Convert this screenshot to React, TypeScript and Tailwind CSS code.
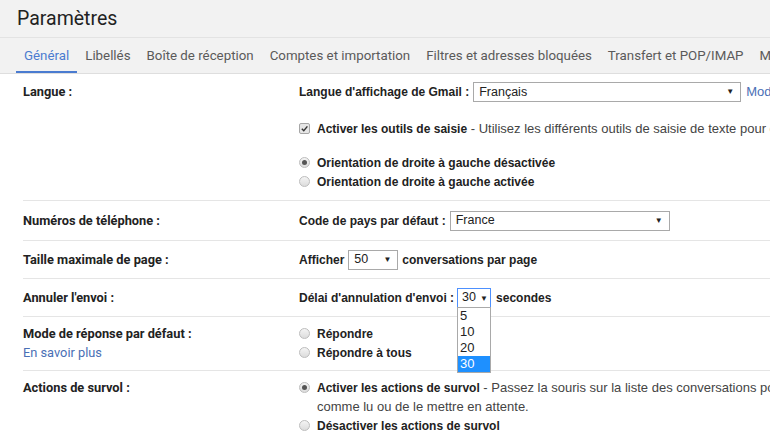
import React from "react";

const arial = { fontFamily: '"Liberation Sans", Arial, sans-serif' };

function Caret() {
  return <span className="text-[8px] text-[#222] leading-none">▼</span>;
}

function Select({ value, w }: { value: string; w: string }) {
  return (
    <div
      className={`${w} h-[20px] flex items-center justify-between bg-white border border-[#a9a9a9] pl-[5px] pr-[6px] text-[12.5px] text-[#222] font-normal`}
      style={arial}
    >
      <span>{value}</span>
      <Caret />
    </div>
  );
}

function Radio({ checked }: { checked?: boolean }) {
  return (
    <span className="w-[11px] h-[11px] rounded-full border border-[#bdbdbd] bg-gradient-to-b from-[#f4f4f4] to-[#dcdcdc] flex items-center justify-center shrink-0">
      {checked && <span className="w-[5px] h-[5px] rounded-full bg-[#555]" />}
    </span>
  );
}

function Check() {
  return (
    <span className="w-[11px] h-[11px] rounded-[2px] border border-[#a6a6a6] bg-[#e6e6e6] flex items-center justify-center shrink-0">
      <svg width="9" height="9" viewBox="0 0 10 10">
        <path d="M2 5.2 L4.2 7.4 L8.2 2.6" fill="none" stroke="#333" strokeWidth="1.6" />
      </svg>
    </span>
  );
}

function Label({ children }: { children: React.ReactNode }) {
  return (
    <div className="w-[276px] shrink-0 text-[12.8px] font-bold text-[#222] leading-[19px]" style={{ fontFamily: "Roboto, Arial, sans-serif" }}>
      {children}
    </div>
  );
}

export default function App() {
  const tabs = [
    "Général",
    "Libellés",
    "Boîte de réception",
    "Comptes et importation",
    "Filtres et adresses bloquées",
    "Transfert et POP/IMAP",
    "Modules",
  ];
  return (
    <div className="w-[770px] h-[433px] overflow-hidden bg-white" style={{ fontFamily: "Roboto, Arial, sans-serif" }}>
      <div className="h-[38px] bg-[#f2f2f2] border-b border-[#e3e3e3] pl-[17px] flex items-center">
        <span className="text-[19.5px] text-[#222] leading-none pt-[1px]">Paramètres</span>
      </div>
      <div className="h-[36px] bg-[#f2f2f2] border-b border-[#dedede] pl-[16px] flex items-stretch whitespace-nowrap overflow-hidden">
        {tabs.map((t, i) => (
          <div
            key={t}
            className={`relative flex items-center px-[8px] text-[13.3px] ${i === 0 ? "text-[#4a7bd0]" : "text-[#5a5a5a]"}`}
          >
            <span>{t}</span>
            {i === 0 && <span className="absolute left-0 right-0 bottom-[-1px] h-[3px] bg-[#4a7bd0]" />}
          </div>
        ))}
      </div>

      <div className="pl-[23px] text-[12px] text-[#222]" style={arial}>
        {/* Langue */}
        <div className="flex border-b border-[#e5e5e5] pt-[8px] pb-[9px]">
          <Label>Langue :</Label>
          <div className="flex flex-col whitespace-nowrap">
            <div className="flex items-center h-[20px]">
              <span className="font-bold mr-[4px]">Langue d'affichage de Gmail :</span>
              <Select value="Français" w="w-[268px]" />
              <span className="ml-[5px] text-[13px] text-[#4a6fb5]">Modifier la langue</span>
            </div>
            <div className="flex items-center h-[19px] mt-[17px]">
              <Check />
              <span className="ml-[7px] font-bold">Activer les outils de saisie</span>
              <span className="text-[13px] text-[#444]">&nbsp;- Utilisez les différents outils de saisie de texte pour écrire</span>
            </div>
            <div className="flex items-center h-[19px] mt-[15px]">
              <Radio checked />
              <span className="ml-[7px] font-bold">Orientation de droite à gauche désactivée</span>
            </div>
            <div className="flex items-center h-[19px]">
              <Radio />
              <span className="ml-[7px] font-bold">Orientation de droite à gauche activée</span>
            </div>
          </div>
        </div>

        {/* Téléphone */}
        <div className="flex items-center border-b border-[#e5e5e5] h-[40px]">
          <Label>Numéros de téléphone :</Label>
          <div className="flex items-center whitespace-nowrap">
            <span className="font-bold mr-[4px]">Code de pays par défaut :</span>
            <Select value="France" w="w-[220px]" />
          </div>
        </div>

        {/* Taille */}
        <div className="flex items-center border-b border-[#e5e5e5] h-[38px]">
          <Label>Taille maximale de page :</Label>
          <div className="flex items-center whitespace-nowrap">
            <span className="font-bold mr-[4px]">Afficher</span>
            <Select value="50" w="w-[50px]" />
            <span className="font-bold ml-[4px]">conversations par page</span>
          </div>
        </div>

        {/* Annuler */}
        <div className="flex items-center border-b border-[#e5e5e5] h-[38px]">
          <Label>Annuler l'envoi :</Label>
          <div className="flex items-center whitespace-nowrap">
            <span className="font-bold mr-[3px]">Délai d'annulation d'envoi :</span>
            <div className="relative">
              <div
                className="w-[34px] h-[20px] flex items-center bg-white border border-[#4d90fe] pl-[4px] text-[12.5px] text-[#222]"
                style={arial}
              >
                <span>30</span>
                <span className="ml-[4px]"><Caret /></span>
              </div>
              <div className="absolute left-0 top-[19px] w-[34px] bg-white border border-[#a9a9a9] z-10 text-[13px] leading-[16px]">
                {["5", "10", "20", "30"].map((o) => (
                  <div key={o} className={`pl-[2px] ${o === "30" ? "bg-[#1e90ff] text-white" : "text-[#222]"}`}>
                    {o}
                  </div>
                ))}
              </div>
            </div>
            <span className="font-bold ml-[5px]">secondes</span>
          </div>
        </div>

        {/* Mode de réponse */}
        <div className="flex border-b border-[#e5e5e5] pt-[7px] pb-[8px]">
          <div className="w-[276px] shrink-0 leading-[19px] text-[12.8px]" style={{ fontFamily: "Roboto, Arial, sans-serif" }}>
            <div className="font-bold text-[#222]">Mode de réponse par défaut :</div>
            <div className="text-[#4a6fb5]">En savoir plus</div>
          </div>
          <div className="flex flex-col whitespace-nowrap">
            <div className="flex items-center h-[19px]">
              <Radio />
              <span className="ml-[7px] font-bold">Répondre</span>
            </div>
            <div className="flex items-center h-[19px]">
              <Radio />
              <span className="ml-[7px] font-bold">Répondre à tous</span>
            </div>
          </div>
        </div>

        {/* Survol */}
        <div className="flex pt-[7px]">
          <Label>Actions de survol :</Label>
          <div className="flex flex-col whitespace-nowrap">
            <div className="flex items-center h-[19px]">
              <Radio checked />
              <span className="ml-[7px] font-bold">Activer les actions de survol</span>
              <span className="text-[13px] text-[#444]">&nbsp;- Passez la souris sur la liste des conversations pour l'archiver, la supprimer, la marquer</span>
            </div>
            <div className="h-[19px] pl-[18px] text-[13px] text-[#444] leading-[19px]">comme lu ou de le mettre en attente.</div>
            <div className="flex items-center h-[19px]">
              <Radio />
              <span className="ml-[7px] font-bold">Désactiver les actions de survol</span>
            </div>
          </div>
        </div>
      </div>
    </div>
  );
}
